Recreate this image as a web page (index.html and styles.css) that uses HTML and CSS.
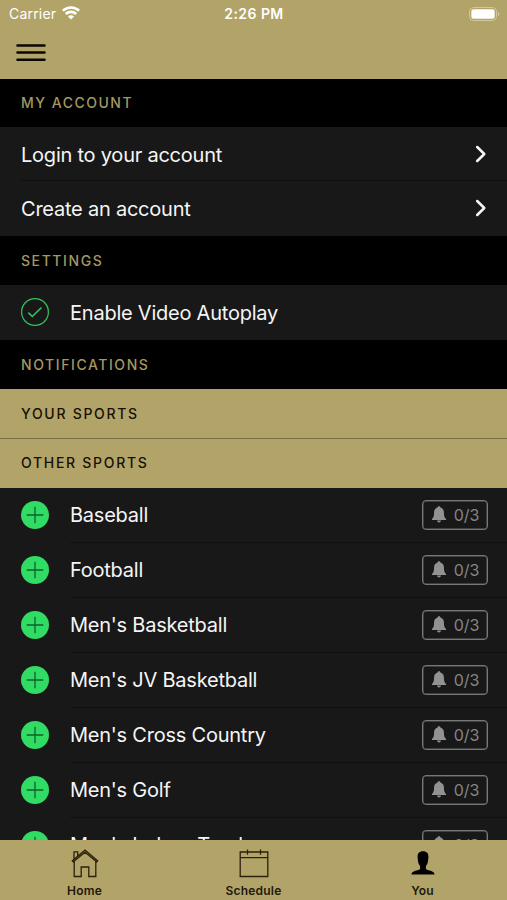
FILE: index.html
```html
<!DOCTYPE html>
<html lang="en">
<head>
<meta charset="utf-8">
<title>Account</title>
<link rel="stylesheet" href="styles.css">
</head>
<body>
<svg class="defs" width="0" height="0" aria-hidden="true">
  <symbol id="chevron" viewBox="0 0 12 18"><path d="M2.2 2 9.3 9l-7.1 7" fill="none" stroke="currentColor" stroke-width="2.5" stroke-linecap="round" stroke-linejoin="round"/></symbol>
  <symbol id="plus" viewBox="0 0 28 28"><circle cx="14" cy="14" r="14" fill="#30dc64"/><path d="M5.7 14h16.6M14 5.7v16.6" stroke="#11602b" stroke-width="1.3"/></symbol>
  <symbol id="bell" viewBox="0 0 16 17"><path d="M8 .3c.8 0 1.4.5 1.4 1.3 2.200.6 3.500 2.300 3.500 4.600 0 4 .7 5.700 2.200 6.800v1H.9v-1c1.500-1.100 2.200-2.800 2.200-6.800 0-2.300 1.300-4 3.500-4.600C6.600.8 7.200.3 8 .3ZM6 14.600h4c-.2 1.300-1 2-2 2s-1.800-.7-2-2Z" fill="currentColor"/></symbol>
</svg>
<div class="app">
  <header class="header">
    <div class="status">
      <div class="carrier"><span>Carrier</span>
        <svg width="18" height="14" viewBox="0 0 18 14" fill="none" stroke="#fff" stroke-width="2.600"><path d="M.9 4.700a11.700 11.700 0 0 1 16.200 0M3.800 8a7.500 7.500 0 0 1 10.400 0"/><path d="M9 13.600 5.900 10.500a4.400 4.400 0 0 1 6.200 0Z" fill="#fff" stroke="none"/></svg>
      </div>
      <div class="time">2:26 PM</div>
      <div class="battery"><svg width="31" height="14" viewBox="0 0 31 14"><rect x=".5" y=".5" width="27" height="13" rx="4" fill="none" stroke="#d0c89f"/><rect x="2.300" y="2.300" width="23.400" height="9.400" rx="2.500" fill="#fff"/><path d="M29 4.800c1.600.7 1.600 3.700 0 4.400Z" fill="#d6ceaa"/></svg></div>
    </div>
    <svg class="menu" width="30" height="20" viewBox="0 0 30 20"><path d="M1.500 2.500h27M1.500 9.600h27M1.500 16.800h27" stroke="#090700" stroke-width="2.500" stroke-linecap="round"/></svg>
  </header>
  <main class="content">
    <h2 class="heading first">MY ACCOUNT</h2>
    <div class="row link"><span class="label">Login to your account</span><svg class="chevron"><use href="#chevron"/></svg></div>
    <div class="row link last"><span class="label">Create an account</span><svg class="chevron"><use href="#chevron"/></svg></div>
    <h2 class="heading">SETTINGS</h2>
    <div class="row setting"><svg class="icon" viewBox="0 0 28 28" fill="none" stroke="#30c85e"><circle cx="14" cy="14" r="13.400" stroke-width="1.200"/><path d="m7.300 14.600 4 3.900 9.200-9" stroke-width="1.600"/></svg><span class="label">Enable Video Autoplay</span></div>
    <h2 class="heading">NOTIFICATIONS</h2>
    <h2 class="heading gold">YOUR SPORTS</h2>
    <h2 class="heading gold divided">OTHER SPORTS</h2>
    <div class="row sport"><svg class="icon"><use href="#plus"/></svg><div class="body"><span class="label">Baseball</span><span class="count"><svg><use href="#bell"/></svg>0/3</span></div></div>
    <div class="row sport"><svg class="icon"><use href="#plus"/></svg><div class="body"><span class="label">Football</span><span class="count"><svg><use href="#bell"/></svg>0/3</span></div></div>
    <div class="row sport"><svg class="icon"><use href="#plus"/></svg><div class="body"><span class="label">Men's Basketball</span><span class="count"><svg><use href="#bell"/></svg>0/3</span></div></div>
    <div class="row sport"><svg class="icon"><use href="#plus"/></svg><div class="body"><span class="label">Men's JV Basketball</span><span class="count"><svg><use href="#bell"/></svg>0/3</span></div></div>
    <div class="row sport"><svg class="icon"><use href="#plus"/></svg><div class="body"><span class="label">Men's Cross Country</span><span class="count"><svg><use href="#bell"/></svg>0/3</span></div></div>
    <div class="row sport"><svg class="icon"><use href="#plus"/></svg><div class="body"><span class="label">Men's Golf</span><span class="count"><svg><use href="#bell"/></svg>0/3</span></div></div>
    <div class="row sport"><svg class="icon"><use href="#plus"/></svg><div class="body"><span class="label">Men's Indoor Track</span><span class="count"><svg><use href="#bell"/></svg>0/3</span></div></div>
  </main>
  <nav class="tabs">
    <div class="tab"><svg width="30" height="30" viewBox="0 0 30 30" fill="none" stroke="#2b210b" stroke-width="1.300"><path d="M4.200 13v15.500h7V19h7.600v9.500h7V13M2.300 12.700 15 2.200l12.700 10.500-1 1.100L15 4.300 3.300 13.800ZM4 11V3.800h3.700V8"/></svg><span>Home</span></div>
    <div class="tab"><svg width="30" height="30" viewBox="0 0 30 30" fill="none" stroke="#2b210b" stroke-width="1.300"><path d="M1.200 4h27.600v24.500H1.200ZM1.200 9.700h27.600M8.500 1.400v5.400M21.500 1.400v5.400"/></svg><span>Schedule</span></div>
    <div class="tab"><svg width="30" height="30" viewBox="0 0 30 30"><path d="M15 3.300c3.700 0 5.600 2.200 5.400 5.700l-.3 3.300c-.2 2.700-1.200 4.600-2.200 5.600v2.300c0 1 .7 1.500 2 1.900 4.300 1.200 6.300 1.700 6.600 4.400h-23c.3-2.700 2.300-3.200 6.600-4.400 1.300-.4 2-.9 2-1.900v-2.300c-1-1-2-2.900-2.200-5.600L9.600 9C9.400 5.500 11.300 3.300 15 3.300Z" fill="#000"/></svg><span>You</span></div>
  </nav>
</div>
</body>
</html>
```
FILE: styles.css
```css
* { box-sizing: border-box; }
body { margin: 0; background: #181818; font-family: Inter, "Liberation Sans", sans-serif; }
.defs { display: none; }
.app { display: flex; flex-direction: column; height: 900px; overflow: hidden; }
svg { display: block; flex: none; }

.header { height: 79px; flex: none; background: #b2a469; }
.status { display: grid; grid-template-columns: 1fr auto 1fr; align-items: center; height: 27px; padding: 0 7px 0 9px; color: #fff; font-size: 14px; }
.carrier { display: flex; align-items: center; gap: 6px; letter-spacing: 0.200px; }
.carrier svg { margin-top: -2px; }
.time { font-weight: 600; letter-spacing: 0.450px; margin-left: -1px; }
.battery { display: flex; justify-content: flex-end; }
.menu { margin: 16px 0 0 16px; }

.content { flex: 1; min-height: 0; overflow: hidden; }
.heading { display: flex; align-items: center; height: 49.500px; margin: 0; padding-left: 21px; background: #000; color: #a39860; font-size: 14px; font-weight: 500; letter-spacing: 1.580px; }
.heading.first { height: 48px; padding-bottom: 1px; letter-spacing: 1.500px; }
.heading.gold { height: 49px; background: #b2a469; color: #181004; letter-spacing: 1.700px; }
.heading.divided { border-top: 1px solid #786d43; height: 49.500px; padding-bottom: 2px; }

.row { display: flex; align-items: center; height: 55px; background: #181818; color: #f5f5f5; font-size: 20px; }
.label { letter-spacing: -0.230px; white-space: nowrap; padding-top: 1px; }
.link { height: 54px; padding: 0 20px 0 21px; justify-content: space-between; background: linear-gradient(#101010, #101010) 21px 100% / 100% 1px no-repeat #181818; }
.link.last { height: 54.500px; background: #181818; }
.chevron { width: 12px; height: 18px; }
.icon { width: 28px; height: 28px; }
.setting { height: 54.500px; padding-left: 21px; gap: 21px; }
.sport { padding-left: 21px; gap: 21px; }
.body { display: flex; flex: 1; align-items: center; justify-content: space-between; height: 55px; padding-right: 19px; border-bottom: 1px solid #101010; }
.count { display: flex; align-items: center; justify-content: center; gap: 7px; width: 66px; height: 30px; border: 1px solid #777; border-radius: 4px; box-shadow: inset 0 0 0 0.500px #666; color: #858585; font-size: 16px; letter-spacing: -0.150px; }
.count svg { width: 16px; height: 17px; color: #929292; }

.tabs { display: grid; grid-template-columns: 169px 169px 169px; height: 60px; flex: none; background: #b2a469; color: #21180a; }
.tab { display: flex; flex-direction: column; align-items: center; padding-top: 8px; font-size: 12px; font-weight: 600; line-height: 16px; letter-spacing: 0.200px; }
.tab span { margin-top: 5px; }
```
